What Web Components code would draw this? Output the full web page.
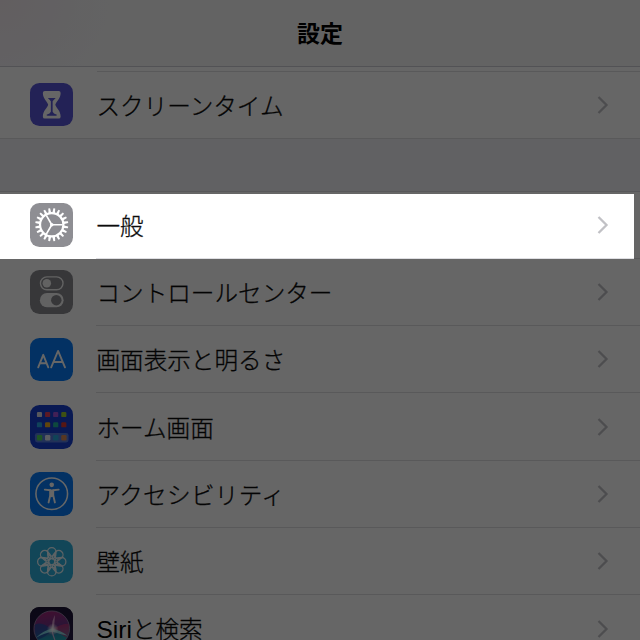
<!DOCTYPE html>
<html lang="ja">
<head>
<meta charset="utf-8">
<title>設定</title>
<style>
html,body{margin:0;height:640px;overflow:hidden;background:#f2f2f7}
</style>
</head>
<body>
<settings-screen></settings-screen>
<script>
const petals = Array.from({length:8},(_,i)=>`<circle cx="22" cy="12" r="4.3" transform="rotate(${i*45} 22 22)"/>`).join('')
  + Array.from({length:8},(_,i)=>`<path d="M22 18.8Q19.2 16 22 11.8Q24.8 16 22 18.8Z" transform="rotate(${i*45+22.5} 22 22)"/>`).join('');
const teeth = Array.from({length:20},(_,i)=>`<path d="M20.6 10.400L21.1 5.300H22.9L23.4 10.400Z" transform="rotate(${i*18+9} 22 22)"/>`).join('');
const apps = [['#dcdce6','#e5405c','#a552d8','#9cc930'],['#28a5e0','#f2ad20','#25b59b','#d83a32']]
  .map((r,y)=>r.map((c,x)=>`<rect x="${7+x*8.2}" y="${7+y*10.4}" width="5.2" height="5.2" rx="1.2" fill="${c}"/>`).join('')).join('');
const dock = ['#4fd35a','#e6e9f2','#28a9dc','#d98a55'].map((c,x)=>`<rect x="${7+x*8.2}" y="30.4" width="5.4" height="5.4" rx="1.2" fill="${c}"/>`).join('');
const ICONS = {
  screentime:['#5856d6',`<path fill="#fff" d="M15 8H29Q31 8 31 10.2C31 16 26.600 18.500 25.600 22C26.600 25.500 31 28 31 33.800Q31 36 29 36H15Q13 36 13 33.800C13 28 17.400 25.500 18.400 22C17.400 18.500 13 16 13 10.200Q13 8 15 8Z"/><path fill="#5856d6" d="M18 15.200H26Q24 17 22.900 18.500V29.200Q23.500 31 27.200 32.200Q27.500 33.200 26 33.200H18Q16.500 33.200 16.800 32.200Q20.500 31 21.100 29.200V18.500Q20 17 18 15.200Z"/>`],
  general:['#8e8e93',`<g fill="#fff">${teeth}</g><g fill="none" stroke="#fff"><circle cx="22" cy="22" r="11.800" stroke-width="2.200"/><path d="M22 22H33M22 22L16.500 12.500M22 22L16.500 31.500" stroke-width="1.700"/></g><circle cx="22" cy="22" r="1.800" fill="#fff"/>`],
  control:['#8a8a8f',`<rect x="10.600" y="7" width="22.800" height="13" rx="6.500" fill="none" stroke="#f4f4f4" stroke-width="1.400"/><circle cx="17" cy="13.500" r="4.300" fill="#f4f4f4"/><rect x="10" y="23.300" width="24" height="14.400" rx="7.200" fill="#f4f4f4"/><circle cx="26.600" cy="30.500" r="5.300" fill="#8a8a8f"/>`],
  display:['#087cf8',`<g fill="none" stroke="#fff" stroke-linecap="round" stroke-linejoin="round"><path stroke-width="1.900" d="M8.300 29.700L13.400 17L18.500 29.700M10.200 25.500H16.600"/><path stroke-width="1.900" d="M21.400 29.700L28.400 13L35.400 29.700M24 24.300H32.800"/></g>`],
  home:['#173fd0',`${apps}<rect x="5" y="28.200" width="34" height="9.800" rx="2.500" fill="#6b8fe0" opacity=".75"/>${dock}`],
  access:['#087cf8',`<circle cx="22" cy="22" r="16" fill="none" stroke="#fff" stroke-width="1.600"/><circle cx="22" cy="13" r="2.300" fill="#fff"/><path d="M15 17.800L20.500 18.500V23.500L18.800 30.800M29 17.800L23.500 18.500V23.500L25.200 30.800" fill="none" stroke="#fff" stroke-width="1.900" stroke-linecap="round" stroke-linejoin="round"/><path d="M19.800 17.800H24.200V24.500L22 25.500L19.800 24.500Z" fill="#fff"/>`],
  wallpaper:['#2fb0dc',`<g fill="none" stroke="#e8f6fb" stroke-width="1.300">${petals}<circle cx="22" cy="22" r="3.100"/></g>`],
  siri:['#1b1530',`<defs><linearGradient id="edge" x1="0" y1="0" x2="0" y2="1"><stop offset="0" stop-color="#1c1436"/><stop offset="1" stop-color="#281c48"/></linearGradient><linearGradient id="orb" x1=".4" y1="0" x2=".6" y2="1"><stop offset="0" stop-color="#a02878"/><stop offset=".45" stop-color="#6c3488"/><stop offset=".7" stop-color="#228fb0"/><stop offset="1" stop-color="#20b8b0"/></linearGradient><radialGradient id="core"><stop offset="0" stop-color="#fff"/><stop offset="1" stop-color="#fff" stop-opacity="0"/></radialGradient></defs><rect width="44" height="44" fill="url(#edge)"/><circle cx="22" cy="22" r="18" fill="url(#orb)" stroke="#9c8ab0" stroke-width=".8"/><path d="M5 18Q12 14 22 23Q17 30 8 33Q4 26 5 18Z" fill="#2450a0" opacity=".75"/><path d="M39 17Q31 17 22 23Q31 27 37 31Q41 24 39 17Z" fill="#d03070" opacity=".6"/><path d="M6 31Q13 24 22 22Q30 23 38 29Q29 27 23 25Q15 26 6 31Z" fill="#8ff0f0" opacity=".8"/><path d="M22 23Q21.500 15 25 8Q25.500 17 23 25L27 37Q22 31 22 23Z" fill="#f0b8e0" opacity=".75"/><circle cx="23" cy="22.500" r="6" fill="url(#core)"/>`]
};

class AppIcon extends HTMLElement{
  connectedCallback(){
    const [bg,art]=ICONS[this.getAttribute('name')];
    this.attachShadow({mode:'open'}).innerHTML=`<style>:host{display:block;width:43.500px;height:43.500px;flex:none;border-radius:9.500px;overflow:hidden;background:${bg}}svg{display:block;width:100%;height:100%}</style><svg viewBox="0 0 44 44">${art}</svg>`;
  }
}
customElements.define('app-icon',AppIcon);

class SettingsRow extends HTMLElement{
  connectedCallback(){
    this.attachShadow({mode:'open'}).innerHTML=`<style>
:host{display:flex;box-sizing:border-box;height:67.330px;padding-left:29.700px;gap:23.300px;align-items:center}
app-icon{margin-top:-.6px}
.body{flex:1;height:100%;display:flex;box-sizing:border-box;align-items:center;justify-content:space-between;padding:0 30px 0 0;border-bottom:1px solid #dedee2}
:host([last]) .body{border-bottom-color:transparent}
span{white-space:nowrap;line-height:34px}
svg{display:block;margin-top:0}
</style><app-icon name="${this.getAttribute('icon')}"></app-icon><div class="body"><span><slot></slot></span><svg width="14" height="20" viewBox="0 0 14 20"><path d="M2.500 2L10.500 10L2.500 18" fill="none" stroke="#c1c1c5" stroke-width="2.300"/></svg></div>`;
  }
}
customElements.define('settings-row',SettingsRow);

class SettingsGroup extends HTMLElement{
  connectedCallback(){
    this.attachShadow({mode:'open'}).innerHTML=`<style>:host{display:block;background:#fff}</style><slot></slot>`;
  }
}
customElements.define('settings-group',SettingsGroup);

class NavBar extends HTMLElement{
  connectedCallback(){
    this.attachShadow({mode:'open'}).innerHTML=`<style>
:host{display:flex;box-sizing:border-box;height:67px;align-items:center;justify-content:center;border-bottom:1px solid #cdcdd4;background:radial-gradient(ellipse 110px 90px at 0 0,#f4ecf0,transparent),linear-gradient(90deg,#f4f4fa,#f8f8f8 110px)}
h1{margin:0 0 3px;font-size:23px;line-height:34px;font-weight:700}
</style><h1><slot></slot></h1>`;
  }
}
customElements.define('nav-bar',NavBar);

class SpotLight extends HTMLElement{
  connectedCallback(){
    this.attachShadow({mode:'open'}).innerHTML=`<style>:host{display:block;position:absolute;left:-4px;top:194px;width:637.500px;height:64.600px;box-shadow:0 0 1px 900px rgba(0,0,0,.6)}</style>`;
  }
}
customElements.define('spot-light',SpotLight);

class SettingsScreen extends HTMLElement{
  connectedCallback(){
    this.attachShadow({mode:'open'}).innerHTML=`<style>
:host{display:block;position:relative;width:640px;height:640px;overflow:hidden;color:#0c0c0c;background:#f2f2f7;font:300 23.600px "Noto Sans CJK JP",sans-serif}
nav-bar{color:#000}
settings-row{-webkit-text-stroke:.3px #0c0c0c}
.top{padding-top:4px;background:#fff;border-bottom:1px solid #dedee2}
.top::before{content:"";display:block;height:1px;margin-left:96.500px;background:#dedee2}
.top settings-row{height:66px}
.main{margin-top:51.500px;border-top:1px solid #dadade}
.latin{font-family:"Liberation Sans",sans-serif;font-size:24.500px;color:#000;-webkit-text-stroke:0}
</style>
<nav-bar>設定</nav-bar>
<settings-group class="top"><settings-row icon="screentime" last>スクリーンタイム</settings-row></settings-group>
<settings-group class="main">
<settings-row icon="general">一般</settings-row>
<settings-row icon="control">コントロールセンター</settings-row>
<settings-row icon="display">画面表示と明るさ</settings-row>
<settings-row icon="home">ホーム画面</settings-row>
<settings-row icon="access" style="letter-spacing:.3px">アクセシビリティ</settings-row>
<settings-row icon="wallpaper">壁紙</settings-row>
<settings-row icon="siri"><span class="latin">Siri</span>と検索</settings-row>
</settings-group>
<spot-light></spot-light>`;
  }
}
customElements.define('settings-screen',SettingsScreen);
</script>
</body>
</html>
